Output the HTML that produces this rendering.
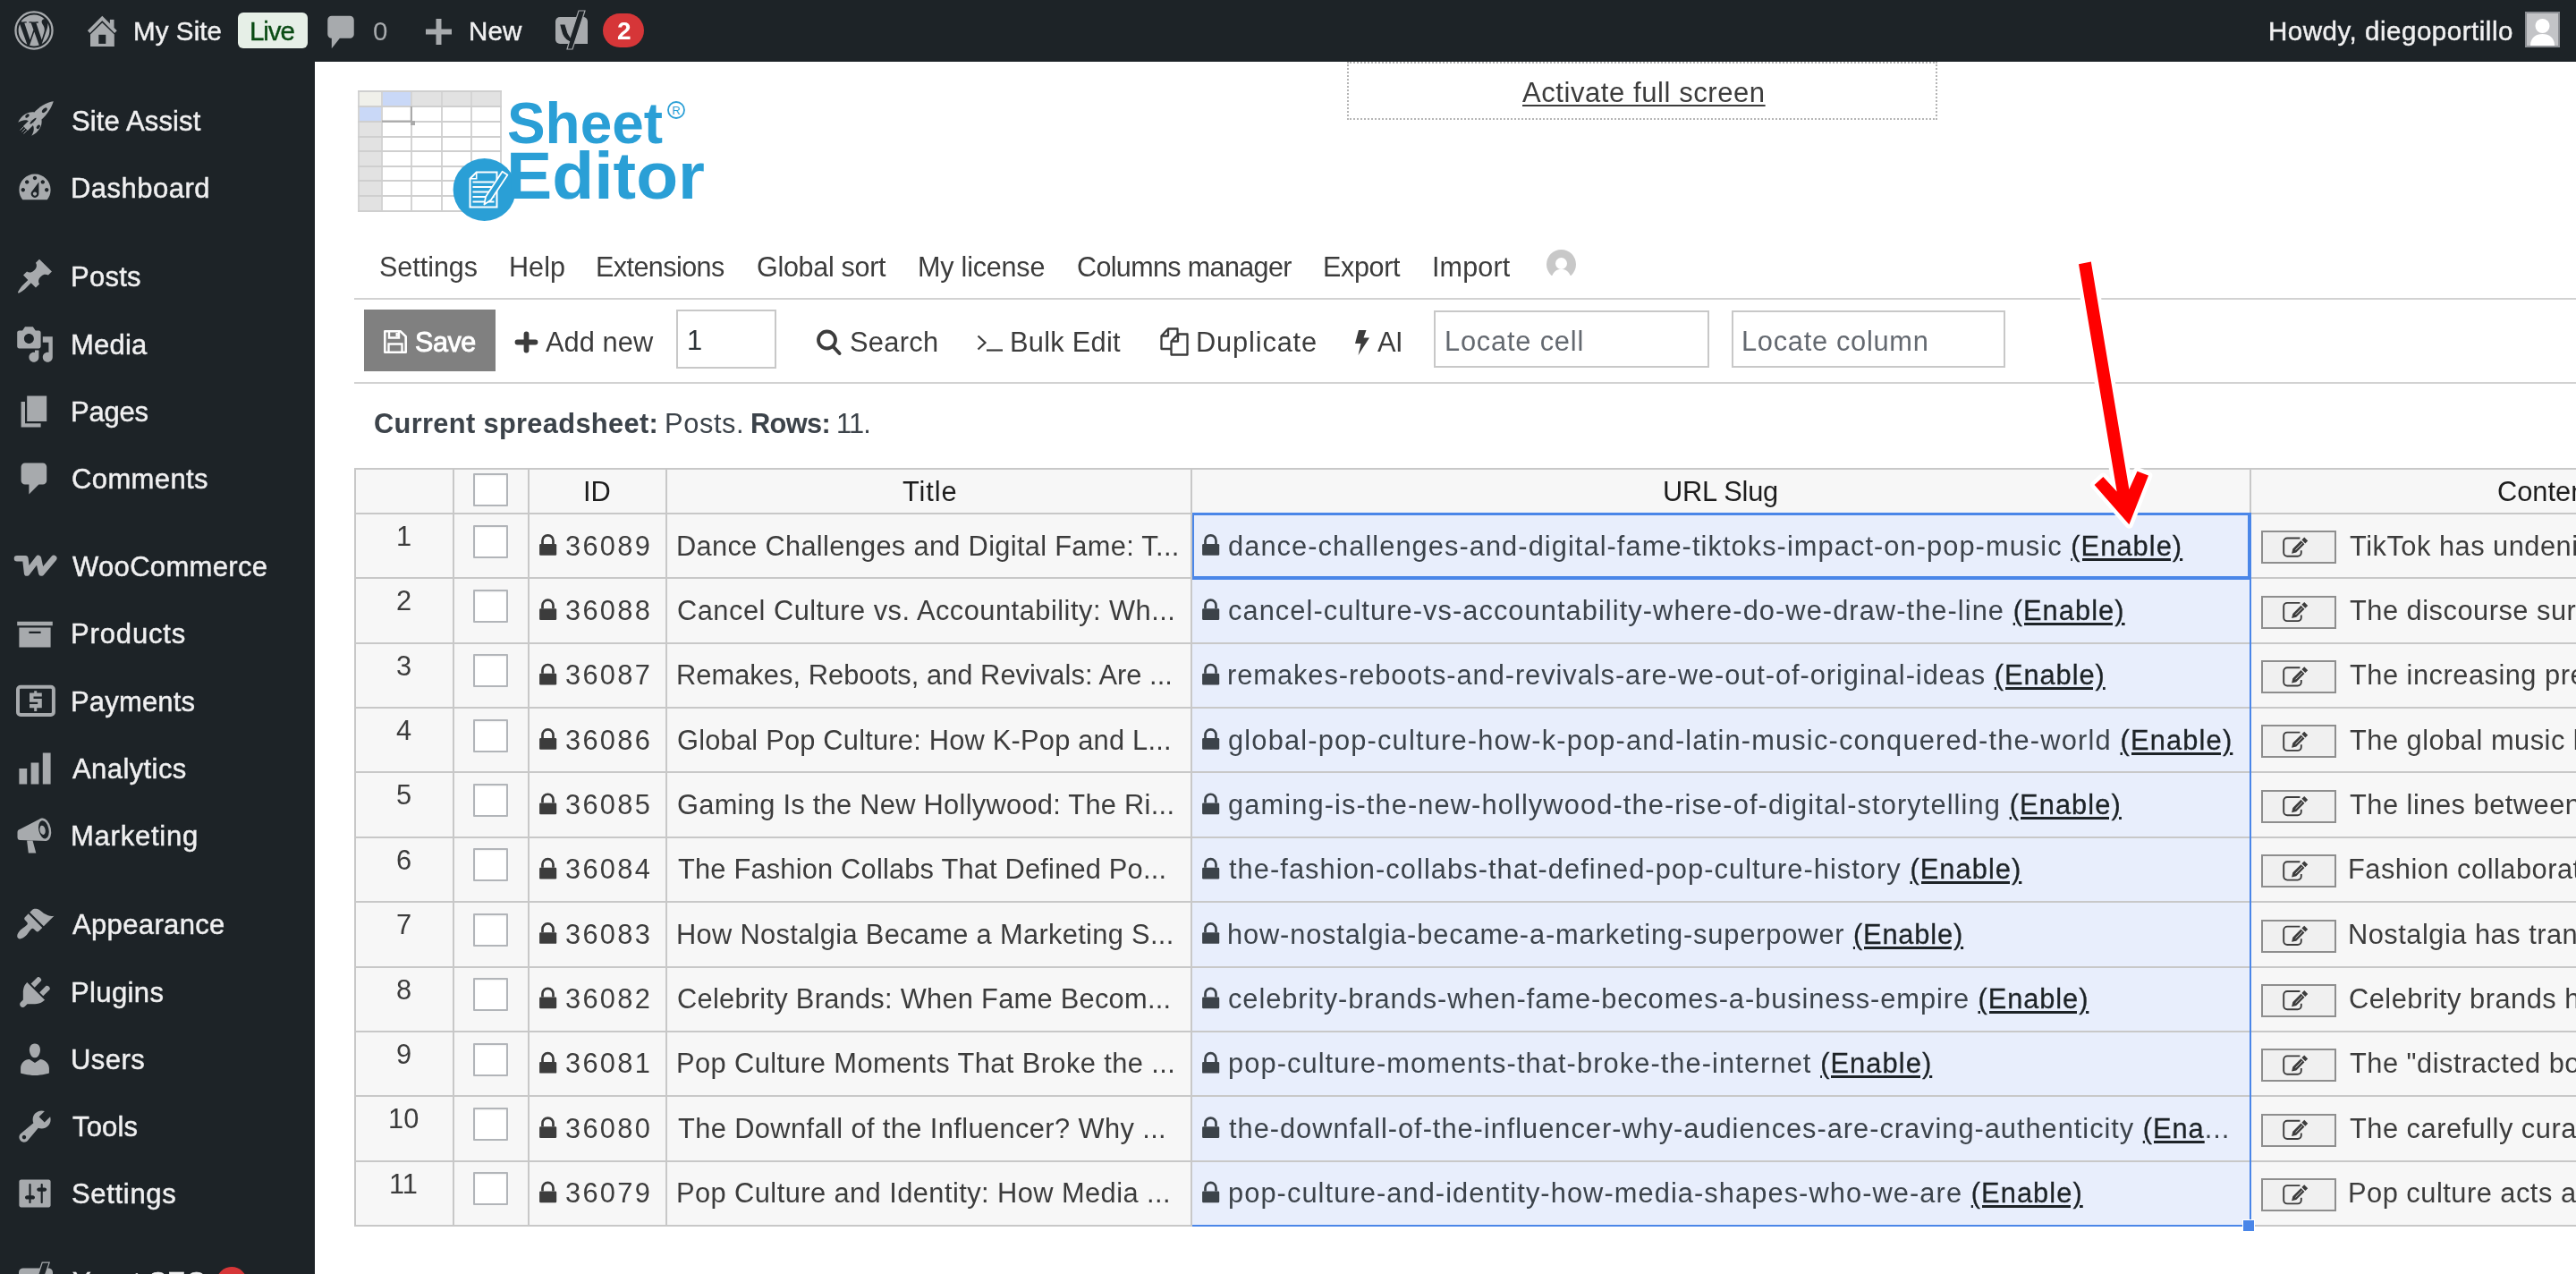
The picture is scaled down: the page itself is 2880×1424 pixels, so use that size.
<!DOCTYPE html>
<html><head><meta charset="utf-8"><title>Sheet Editor</title>
<style>
html,body{margin:0;padding:0;width:2880px;height:1424px;overflow:hidden;background:#fff;font-family:"Liberation Sans",sans-serif;}
.t{position:absolute;white-space:pre;font-family:"Liberation Sans",sans-serif;will-change:transform;}
.a{position:absolute;}
svg{position:absolute;overflow:visible;}
u{text-decoration-thickness:3px;text-underline-offset:3px;color:#1d2327;-webkit-text-stroke:0.3px #1d2327;}
b{font-weight:700;}
</style></head><body>
<div class="a" style="left:0px;top:0px;width:2880px;height:69px;background:#1d2327;"></div>
<div class="a" style="left:0px;top:69px;width:352px;height:1355px;background:#1d2327;"></div>
<svg style="left:15.5px;top:12px;" width="44" height="44" viewBox="0 0 24 24"><circle cx="12" cy="12" r="11.2" fill="none" stroke="#a7aaad" stroke-width="1.25"/><path transform="translate(12 12) scale(0.88) translate(-12 -12)" fill="#a7aaad" d="M21.469 6.825c.84 1.537 1.318 3.3 1.318 5.175 0 3.979-2.156 7.456-5.363 9.325l3.295-9.527c.615-1.54.82-2.771.82-3.864 0-.405-.026-.78-.07-1.11m-7.981.105c.647-.03 1.232-.105 1.232-.105.582-.075.514-.93-.067-.899 0 0-1.755.135-2.88.135-1.064 0-2.850-.15-2.850-.15-.585-.03-.661.855-.075.885 0 0 .54.061 1.125.09l1.68 4.605-2.37 7.08L5.354 6.9c.649-.03 1.234-.1 1.234-.1.585-.075.516-.93-.065-.896 0 0-1.746.138-2.874.138-.2 0-.438-.008-.69-.015C4.911 3.15 8.235 1.215 12 1.215c2.809 0 5.365 1.072 7.286 2.833-.046-.003-.091-.009-.141-.009-1.060 0-1.812.923-1.812 1.914 0 .89.513 1.643 1.060 2.531.411.72.89 1.643.89 2.977 0 .915-.354 1.994-.821 3.479l-1.075 3.585-3.9-11.61.001.014zM12 22.784c-1.059 0-2.081-.153-3.048-.437l3.237-9.406 3.315 9.087c.024.053.05.101.078.149-1.12.393-2.325.609-3.582.609M1.211 12c0-1.564.336-3.05.935-4.39L7.29 21.709C3.694 19.960 1.212 16.271 1.211 12"/></svg>
<svg style="left:0px;top:0px;" width="200" height="69" viewBox="0 0 200 69"><path d="M99.2 35.6L114.3 20.5L129.4 35.6" fill="none" stroke="#a7aaad" stroke-width="3.8"/><rect x="122.9" y="21.9" width="4.6" height="9" fill="#a7aaad"/><path d="M101 38.6L114.3 25.5L127.8 38.6V52H101z" fill="#a7aaad"/><rect x="110.3" y="38.8" width="8" height="10.1" fill="#1d2327"/></svg>
<svg style="left:364px;top:16px;" width="34" height="40" viewBox="2 1.5 15 17"><path fill="#a7aaad" d="M5 2h9c1.1 0 2 .9 2 2v7c0 1.1-.9 2-2 2h-5l-4 5v-5H5c-1.1 0-2-.9-2-2V4c0-1.1.9-2 2-2z"/></svg>
<svg style="left:476px;top:21px;" width="29" height="29" viewBox="0 0 29 29"><path fill="#a7aaad" d="M11.5 0h6v11.5h11.5v6H17.5v11.5h-6V17.5H0v-6h11.5z"/></svg>
<svg style="left:618px;top:11px;" width="42" height="46" viewBox="0 0 42 46"><path fill="#a7aaad" d="M8 8h26a5 5 0 0 1 5 5v25H8a5 5 0 0 1-5-5V13a5 5 0 0 1 5-5z"/><path fill="#1d2327" stroke="#a7aaad" stroke-width="1.2" d="M29 1h7l-14 43h-6l2.5-8.5C14 34 10.5 29 9 22l-1.5-6h6.5l3 10 2.5 4z"/></svg>
<div class="a" style="left:266px;top:14px;width:78px;height:40px;background:#e6efe7;border-radius:6px;"></div>
<div class="a" style="left:674px;top:15px;width:46px;height:38px;background:#d63638;border-radius:19px;"></div>
<div class="a" style="left:2823px;top:13px;width:39px;height:40px;background:#c3c4c7;box-sizing:border-box;border:2px solid #8c8f94;overflow:hidden;"></div>
<svg style="left:2825px;top:15px;" width="35" height="36" viewBox="0 0 35 36"><circle cx="17.5" cy="14" r="8" fill="#fff"/><path fill="#fff" d="M4 36c0-9 6-13 13.5-13S31 27 31 36z"/></svg>
<svg style="left:17px;top:188px;" width="44" height="44" viewBox="0 0 20 20"><g fill="#a7aaad"><path d="M3.76 16h12.48c1.1-1.37 1.76-3.11 1.76-5 0-4.42-3.58-8-8-8s-8 3.58-8 8c0 1.89.66 3.63 1.76 5zM10 4c.55 0 1 .45 1 1s-.45 1-1 1-1-.45-1-1 .45-1 1-1zM6 6c.55 0 1 .45 1 1s-.45 1-1 1-1-.45-1-1 .45-1 1-1zm8 0c.55 0 1 .45 1 1s-.45 1-1 1-1-.45-1-1 .45-1 1-1zm-5.37 5.55L12 7v6c0 1.1-.9 2-2 2s-2-.9-2-2c0-.57.24-1.08.63-1.45zM4 10c.55 0 1 .45 1 1s-.45 1-1 1-1-.45-1-1 .45-1 1-1zm12 0c.55 0 1 .45 1 1s-.45 1-1 1-1-.45-1-1 .45-1 1-1zm-5 3c0-.55-.45-1-1-1s-1 .45-1 1 .45 1 1 1 1-.45 1-1z" fill-rule="evenodd"/></g></svg>
<svg style="left:17px;top:287.4px;" width="44" height="44" viewBox="0 0 20 20"><g fill="#a7aaad"><path d="M10.44 3.02l1.82-1.82 6.36 6.35-1.83 1.82c-1.05-.68-2.48-.57-3.41.36l-.75.75c-.92.93-1.04 2.35-.35 3.41l-1.83 1.82-2.41-2.41-2.8 2.79c-.42.42-3.38 2.71-3.8 2.29s1.86-3.39 2.28-3.81l2.79-2.79L4.1 9.36l1.83-1.82c1.05.69 2.48.57 3.4-.36l.75-.75c.93-.92 1.05-2.35.36-3.41z"/></g></svg>
<svg style="left:17px;top:362.5px;" width="44" height="44" viewBox="0 0 20 20"><g fill="#a7aaad"><path fill-rule="evenodd" d="M13 11V4c0-.55-.45-1-1-1h-1.67L9 1H5L3.67 3H2c-.55 0-1 .45-1 1v7c0 .55.45 1 1 1h10c.55 0 1-.45 1-1zM7 4.5c1.38 0 2.5 1.12 2.5 2.5S8.38 9.5 7 9.5 4.5 8.38 4.5 7 5.62 4.5 7 4.5zM14 6h5v10.5c0 1.38-1.12 2.5-2.5 2.5S14 17.88 14 16.5s1.12-2.5 2.5-2.5c.17 0 .34.02.5.05V9h-3V6zm-4 8.05V13h2v3.5c0 1.38-1.12 2.5-2.5 2.5S7 17.88 7 16.5 8.12 14 9.5 14c.17 0 .34.02.5.05z"/></g></svg>
<svg style="left:17px;top:437.5px;" width="44" height="44" viewBox="0 0 20 20"><g fill="#a7aaad"><path d="M6 15V2h10v13H6zm-1 1h8v2H3V5h2v11z"/></g></svg>
<svg style="left:17px;top:512.5px;" width="44" height="44" viewBox="0 0 20 20"><g fill="#a7aaad"><path d="M5 2h9c1.1 0 2 .9 2 2v7c0 1.1-.9 2-2 2h-2l-5 5v-5H5c-1.1 0-2-.9-2-2V4c0-1.1.9-2 2-2z"/></g></svg>
<svg style="left:17px;top:686px;" width="44" height="44" viewBox="0 0 20 20"><g fill="#a7aaad"><path d="M19 4v2H1V4h18zM2 7h16v10H2V7zm11 3V9H7v1h6z"/></g></svg>
<svg style="left:17px;top:836.5px;" width="44" height="44" viewBox="0 0 20 20"><g fill="#a7aaad"><path d="M18 18V2h-4v16h4zm-6 0V7H8v11h4zm-6 0v-8H2v8h4z"/></g></svg>
<svg style="left:17px;top:1011px;" width="44" height="44" viewBox="0 0 20 20"><g fill="#a7aaad"><path d="M14.48 11.06L7.41 3.99l1.5-1.5c.5-.56 2.3-.47 3.51.32 1.21.8 1.43 1.28 2.91 2.1 1.18.64 2.45 1.26 4.45.85zm-.71.71L6.7 4.7 4.93 6.47c-.39.39-.39 1.02 0 1.41l1.06 1.06c.39.39.39 1.03 0 1.42-.6.6-1.43 1.11-2.21 1.69-.35.26-.7.53-1.01.84C1.43 14.23.4 16.08 1.4 17.07c.99 1 2.84-.03 4.18-1.36.31-.31.58-.66.85-1.02.57-.78 1.08-1.61 1.69-2.21.39-.39 1.02-.39 1.41 0l1.06 1.06c.39.39 1.02.39 1.41 0z"/></g></svg>
<svg style="left:17px;top:1086.5px;" width="44" height="44" viewBox="0 0 20 20"><g fill="#a7aaad"><path d="M13.11 4.36L9.87 7.6 8 5.73l3.24-3.24c.35-.34 1.05-.2 1.56.32.52.51.66 1.21.31 1.55zm-8 1.77l.91-1.12 9.01 9.01-1.19.84c-.71.71-2.63 1.16-3.82 1.16H6.14L4.9 17.26c-.59.59-1.54.59-2.12 0-.59-.58-.59-1.53 0-2.12l1.24-1.24v-3.88c0-1.13.4-3.19 1.09-3.89zm7.26 3.97l3.24-3.24c.34-.35 1.04-.21 1.55.31.52.51.66 1.21.31 1.55l-3.24 3.25z"/></g></svg>
<svg style="left:17px;top:1161.5px;" width="44" height="44" viewBox="0 0 20 20"><g fill="#a7aaad"><path d="M10 9.25c-2.27 0-2.73-3.44-2.73-3.44C7 4.02 7.82 2 9.97 2c2.16 0 2.98 2.02 2.71 3.81 0 0-.41 3.44-2.68 3.44zm0 2.57L12.72 10c2.39 0 4.52 2.33 4.52 4.53v2.49s-3.65 1.13-7.24 1.13c-3.65 0-7.24-1.13-7.24-1.13v-2.49c0-2.25 1.94-4.48 4.47-4.48z"/></g></svg>
<svg style="left:17px;top:1236.5px;" width="44" height="44" viewBox="0 0 20 20"><g fill="#a7aaad"><path fill-rule="evenodd" d="M16.68 9.77c-1.34 1.34-3.3 1.67-4.95.99l-5.41 6.52c-.99.99-2.59.99-3.58 0s-.99-2.59 0-3.57l6.52-5.42c-.68-1.65-.35-3.61.99-4.95 1.28-1.28 3.12-1.62 4.72-1.06l-2.89 2.89 2.82 2.82 2.86-2.87c.53 1.58.18 3.39-1.08 4.65zM3.81 16.21c.4.39 1.04.39 1.43 0 .4-.4.4-1.04 0-1.43-.39-.4-1.03-.4-1.43 0-.39.39-.39 1.03 0 1.43z"/></g></svg>
<svg style="left:17px;top:1312px;" width="44" height="44" viewBox="0 0 20 20"><g fill="#a7aaad"><path fill-rule="evenodd" d="M18 16V4c0-.55-.45-1-1-1H3c-.55 0-1 .45-1 1v12c0 .55.45 1 1 1h14c.55 0 1-.45 1-1zM8 11h1c.55 0 1 .45 1 1s-.45 1-1 1H8v1.5c0 .28-.22.5-.5.5s-.5-.22-.5-.5V13H6c-.55 0-1-.45-1-1s.45-1 1-1h1V5.5c0-.28.22-.5.5-.5s.5.22.5.5V11zm5-2h-1c-.55 0-1-.45-1-1s.45-1 1-1h1V5.5c0-.28.22-.5.5-.5s.5.22.5.5V7h1c.55 0 1 .45 1 1s-.45 1-1 1h-1v5.5c0 .28-.22.5-.5.5s-.5-.22-.5-.5V9z"/></g></svg>
<svg style="left:0;top:0" width="352" height="1424" viewBox="0 0 352 1424"><g fill="#a7aaad"><path d="M59.8 113.3C52 114.5 44 119 37.5 126.5L32.5 132.5L39.5 139.5L45.5 134.5C53 128 57.5 120.5 59.8 113.3Z"/><path d="M38.5 125.5C31 124.5 24.5 128.5 20.2 136.8C25.5 133.5 30 133.5 33.5 136Z"/><path d="M46.5 133.5C47.5 141 43.5 147.5 35.3 151.8C38.5 146.5 38.5 142 36 138.5Z"/><path d="M33.5 133.5L38.5 138.5L31 146L26 141Z"/><ellipse cx="49.8" cy="123.2" rx="3.6" ry="1.9" transform="rotate(-45 49.8 123.2)" fill="#1d2327"/><ellipse cx="37" cy="135.2" rx="4.8" ry="1.2" transform="rotate(-45 37 135.2)" fill="#1d2327"/><ellipse cx="30.5" cy="129.5" rx="2.6" ry="1.7" transform="rotate(-40 30.5 129.5)" fill="#1d2327"/><ellipse cx="42.8" cy="141.8" rx="2.6" ry="1.7" transform="rotate(-50 42.8 141.8)" fill="#1d2327"/><path d="M24.5 147.5l4-4M26.5 149.5l4-4M22.5 145.5l4-4" stroke="#a7aaad" stroke-width="0.9" fill="none"/><path d="M19 624.2H28.3L30.2 640.5L42.8 624L46.3 640.5L60.2 624" fill="none" stroke="#a7aaad" stroke-width="6.6" stroke-linejoin="round" stroke-linecap="round"/><rect x="20" y="767.8" width="39.9" height="31.2" rx="3" fill="none" stroke="#a7aaad" stroke-width="4"/><path d="M38.2 772.2h3v2.2h5.6v4.2h-9.3v2.4h9.3v10.3h-5.6v3.6h-3v-3.6h-5.2v-4.2h9.2v-2.4h-9.2v-10.3h5.2z"/><path d="M22.5 926.8L46.2 914.5L52.1 939.9L22.5 939Q19.5 939 19.5 935.5V930.5Q19.5 927.5 22.5 926.8Z"/><ellipse cx="49.5" cy="927.2" rx="7.4" ry="12.9" transform="rotate(-12 49.5 927.2)"/><ellipse cx="48.9" cy="927.3" rx="5.6" ry="10.3" transform="rotate(-12 48.9 927.3)" fill="#1d2327"/><ellipse cx="47.6" cy="927.8" rx="3.1" ry="5.2" transform="rotate(-12 47.6 927.8)"/><path d="M30.1 939.5H36.5L40.3 953.5H31.8Z"/><path d="M26 1417.4H54a5 5 0 0 1 5 5V1460H26a5 5 0 0 1-5-5V1422.4a5 5 0 0 1 5-5z"/><path d="M47.2 1411.2H55.2L42 1450H34z" fill="#1d2327" stroke="#a7aaad" stroke-width="1.2"/></g></svg>
<div class="a" style="left:242px;top:1416px;width:34px;height:34px;background:#d63638;border-radius:17px;"></div>
<svg style="left:0;top:0" width="2880" height="300" viewBox="0 0 2880 300"><rect x="401" y="102" width="159" height="17" fill="#e2e2e2"/><rect x="401" y="102" width="26" height="134" fill="#e2e2e2"/><rect x="402" y="103" width="25" height="16" fill="#f0f0ea"/><rect x="427" y="103" width="33" height="16" fill="#c9d8f7"/><rect x="402" y="119" width="25" height="17" fill="#c9d8f7"/><rect x="400" y="101" width="2" height="136" fill="#d4d4d4"/><rect x="426" y="101" width="2" height="136" fill="#d4d4d4"/><rect x="459" y="101" width="2" height="136" fill="#d4d4d4"/><rect x="493" y="101" width="2" height="136" fill="#d4d4d4"/><rect x="526" y="101" width="2" height="136" fill="#d4d4d4"/><rect x="559" y="101" width="2" height="136" fill="#d4d4d4"/><rect x="400" y="101" width="161" height="2" fill="#cfcfcf"/><rect x="400" y="118" width="161" height="2" fill="#cfcfcf"/><rect x="400" y="135" width="161" height="2" fill="#cfcfcf"/><rect x="400" y="152" width="161" height="2" fill="#cfcfcf"/><rect x="400" y="168" width="161" height="2" fill="#cfcfcf"/><rect x="400" y="185" width="161" height="2" fill="#cfcfcf"/><rect x="400" y="201" width="161" height="2" fill="#cfcfcf"/><rect x="400" y="218" width="161" height="2" fill="#cfcfcf"/><rect x="400" y="235" width="161" height="2" fill="#cfcfcf"/><circle cx="541.6" cy="212" r="35" fill="#2a9fd6"/><path d="M532.7 192.5H555.5V231.5H525.5V199.7z" fill="none" stroke="#fff" stroke-width="2"/><path d="M532.7 192.5V199.7H525.5" fill="none" stroke="#fff" stroke-width="1.6"/><rect x="528.5" y="202.5" width="24" height="2" fill="#fff"/><rect x="528.5" y="208" width="24" height="2" fill="#fff"/><rect x="528.5" y="213.5" width="24" height="2" fill="#fff"/><rect x="528.5" y="219" width="24" height="2" fill="#fff"/><rect x="528.5" y="224.5" width="24" height="2" fill="#fff"/><path d="M567.4 195.5L548.9 223.5L541.4 228.6L543.1 219.7L561.6 191.7z" fill="#2a9fd6" stroke="#fff" stroke-width="1.8" stroke-linejoin="round"/><rect x="427" y="134.5" width="33" height="2.2" fill="#aaa"/><rect x="458.8" y="119" width="2.2" height="17" fill="#aaa"/><rect x="459" y="135" width="5" height="5" fill="#aaa"/><text x="567" y="160.3" font-family="Liberation Sans" font-weight="700" font-size="64" fill="#2a9fd6" textLength="174" lengthAdjust="spacingAndGlyphs">Sheet</text><text x="566" y="221.8" font-family="Liberation Sans" font-weight="700" font-size="74" fill="#2a9fd6" textLength="222" lengthAdjust="spacingAndGlyphs">Editor</text><circle cx="756" cy="123" r="9" fill="none" stroke="#2a9fd6" stroke-width="1.8"/><text x="756" y="128" text-anchor="middle" font-family="Liberation Sans" font-size="13" fill="#2a9fd6">R</text></svg>
<div class="a" style="left:1506px;top:69px;width:660px;height:65px;background:transparent;box-sizing:border-box;border:2px dotted #b5b5b5;"></div>
<svg style="left:1729px;top:279px;overflow:hidden;" width="33" height="29" viewBox="0 0 33 29"><circle cx="16.5" cy="16.5" r="16.5" fill="#c8c8c8"/><circle cx="16.5" cy="15.5" r="6.5" fill="#fff"/><path d="M6 30c2-6 6-8 10.5-8S25 24 27 30z" fill="#fff"/></svg>
<div class="a" style="left:396px;top:333px;width:2484px;height:2px;background:#d2d2d2;"></div>
<div class="a" style="left:396px;top:427px;width:2484px;height:2px;background:#d2d2d2;"></div>
<div class="a" style="left:407px;top:346px;width:147px;height:69px;background:#808080;"></div>
<svg style="left:429px;top:369px;" width="26" height="26" viewBox="0 0 26 26"><path d="M1.3 1.3h17.5l5.9 5.9v17.5H1.3z" fill="none" stroke="#fff" stroke-width="2.6" stroke-linejoin="round"/><path d="M6 1.5v7h11v-7" fill="none" stroke="#fff" stroke-width="2.4"/><rect x="13.5" y="3" width="2.4" height="4" fill="#fff"/><path d="M5.5 24.5v-9h15v9" fill="none" stroke="#fff" stroke-width="2.4"/></svg>
<svg style="left:576px;top:371px;" width="25" height="23" viewBox="0 0 25 23"><path d="M12.5 2.5v18M2.5 11.5h20" stroke="#3c3c3c" stroke-width="5.8" stroke-linecap="round"/></svg>
<div class="a" style="left:756px;top:346px;width:112px;height:66px;background:#fff;box-sizing:border-box;border:2px solid #c8c8c8;"></div>
<svg style="left:912px;top:368px;" width="30" height="30" viewBox="0 0 30 30"><circle cx="12.5" cy="12" r="9.5" fill="none" stroke="#3c3c3c" stroke-width="3.8"/><path d="M19.5 19.5l7 7.5" stroke="#3c3c3c" stroke-width="4" stroke-linecap="round"/></svg>
<svg style="left:1092px;top:374px;" width="30" height="20" viewBox="0 0 30 20"><path d="M1.5 1.5l8 7.5-8 7.5" fill="none" stroke="#3c3c3c" stroke-width="2.2"/><path d="M11 17.5h18" stroke="#3c3c3c" stroke-width="2.2"/></svg>
<svg style="left:1297px;top:366px;" width="33" height="33" viewBox="1297 366 33 33"><g fill="none" stroke="#3c3c3c" stroke-width="2.3" stroke-linejoin="round"><path d="M1306 367.5H1316.5V374M1309.5 390H1298.5V375.5L1306 367.5V375.5H1298.5"/><path d="M1317 373.5H1327.5V396.5H1309.5V381.5L1317 373.5V381.5H1309.5"/></g></svg>
<svg style="left:1514px;top:368px;" width="18" height="30" viewBox="0 0 18 30"><path d="M5 1h8.5l-3 8.5H17L4.5 29l3-13H1z" fill="#3c3c3c"/></svg>
<div class="a" style="left:1603px;top:347px;width:308px;height:64px;background:#fff;box-sizing:border-box;border:2px solid #c8c8c8;"></div>
<div class="a" style="left:1936px;top:347px;width:306px;height:64px;background:#fff;box-sizing:border-box;border:2px solid #c8c8c8;"></div>
<div class="a" style="left:397px;top:523px;width:2483px;height:848px;background:#f7f7f7;"></div>
<div class="a" style="left:1333px;top:575px;width:1183px;height:796px;background:#e8eefc;"></div>
<div class="a" style="left:396px;top:523px;width:2484px;height:2px;background:#c8c8c8;"></div>
<div class="a" style="left:396px;top:573px;width:2484px;height:2px;background:#c8c8c8;"></div>
<div class="a" style="left:396px;top:645px;width:2484px;height:2px;background:#c8c8c8;"></div>
<div class="a" style="left:396px;top:718px;width:2484px;height:2px;background:#c8c8c8;"></div>
<div class="a" style="left:396px;top:790px;width:2484px;height:2px;background:#c8c8c8;"></div>
<div class="a" style="left:396px;top:862px;width:2484px;height:2px;background:#c8c8c8;"></div>
<div class="a" style="left:396px;top:935px;width:2484px;height:2px;background:#c8c8c8;"></div>
<div class="a" style="left:396px;top:1007px;width:2484px;height:2px;background:#c8c8c8;"></div>
<div class="a" style="left:396px;top:1080px;width:2484px;height:2px;background:#c8c8c8;"></div>
<div class="a" style="left:396px;top:1152px;width:2484px;height:2px;background:#c8c8c8;"></div>
<div class="a" style="left:396px;top:1224px;width:2484px;height:2px;background:#c8c8c8;"></div>
<div class="a" style="left:396px;top:1297px;width:2484px;height:2px;background:#c8c8c8;"></div>
<div class="a" style="left:396px;top:1369px;width:2484px;height:2px;background:#c8c8c8;"></div>
<div class="a" style="left:396px;top:523px;width:2px;height:848px;background:#c8c8c8;"></div>
<div class="a" style="left:506px;top:523px;width:2px;height:848px;background:#c8c8c8;"></div>
<div class="a" style="left:590px;top:523px;width:2px;height:848px;background:#c8c8c8;"></div>
<div class="a" style="left:744px;top:523px;width:2px;height:848px;background:#c8c8c8;"></div>
<div class="a" style="left:1331px;top:523px;width:2px;height:848px;background:#c8c8c8;"></div>
<div class="a" style="left:2515px;top:523px;width:2px;height:848px;background:#c8c8c8;"></div>
<div class="a" style="left:529px;top:529px;width:39px;height:37px;background:#fff;box-sizing:border-box;border:2px solid #b2b5b9;border-radius:1px;box-shadow:inset 0 1px 2px rgba(0,0,0,.06);"></div>
<div class="a" style="left:529px;top:587px;width:39px;height:37px;background:#fff;box-sizing:border-box;border:2px solid #b2b5b9;border-radius:1px;box-shadow:inset 0 1px 2px rgba(0,0,0,.06);"></div>
<div class="a" style="left:2528px;top:593px;width:84px;height:37px;background:#f0f0f0;box-sizing:border-box;border:2px solid #8e8e8e;"></div>
<div class="a" style="left:529px;top:659px;width:39px;height:37px;background:#fff;box-sizing:border-box;border:2px solid #b2b5b9;border-radius:1px;box-shadow:inset 0 1px 2px rgba(0,0,0,.06);"></div>
<div class="a" style="left:2528px;top:666px;width:84px;height:37px;background:#f0f0f0;box-sizing:border-box;border:2px solid #8e8e8e;"></div>
<div class="a" style="left:529px;top:731px;width:39px;height:37px;background:#fff;box-sizing:border-box;border:2px solid #b2b5b9;border-radius:1px;box-shadow:inset 0 1px 2px rgba(0,0,0,.06);"></div>
<div class="a" style="left:2528px;top:738px;width:84px;height:37px;background:#f0f0f0;box-sizing:border-box;border:2px solid #8e8e8e;"></div>
<div class="a" style="left:529px;top:804px;width:39px;height:37px;background:#fff;box-sizing:border-box;border:2px solid #b2b5b9;border-radius:1px;box-shadow:inset 0 1px 2px rgba(0,0,0,.06);"></div>
<div class="a" style="left:2528px;top:810px;width:84px;height:37px;background:#f0f0f0;box-sizing:border-box;border:2px solid #8e8e8e;"></div>
<div class="a" style="left:529px;top:876px;width:39px;height:37px;background:#fff;box-sizing:border-box;border:2px solid #b2b5b9;border-radius:1px;box-shadow:inset 0 1px 2px rgba(0,0,0,.06);"></div>
<div class="a" style="left:2528px;top:883px;width:84px;height:37px;background:#f0f0f0;box-sizing:border-box;border:2px solid #8e8e8e;"></div>
<div class="a" style="left:529px;top:948px;width:39px;height:37px;background:#fff;box-sizing:border-box;border:2px solid #b2b5b9;border-radius:1px;box-shadow:inset 0 1px 2px rgba(0,0,0,.06);"></div>
<div class="a" style="left:2528px;top:955px;width:84px;height:37px;background:#f0f0f0;box-sizing:border-box;border:2px solid #8e8e8e;"></div>
<div class="a" style="left:529px;top:1021px;width:39px;height:37px;background:#fff;box-sizing:border-box;border:2px solid #b2b5b9;border-radius:1px;box-shadow:inset 0 1px 2px rgba(0,0,0,.06);"></div>
<div class="a" style="left:2528px;top:1028px;width:84px;height:37px;background:#f0f0f0;box-sizing:border-box;border:2px solid #8e8e8e;"></div>
<div class="a" style="left:529px;top:1093px;width:39px;height:37px;background:#fff;box-sizing:border-box;border:2px solid #b2b5b9;border-radius:1px;box-shadow:inset 0 1px 2px rgba(0,0,0,.06);"></div>
<div class="a" style="left:2528px;top:1100px;width:84px;height:37px;background:#f0f0f0;box-sizing:border-box;border:2px solid #8e8e8e;"></div>
<div class="a" style="left:529px;top:1166px;width:39px;height:37px;background:#fff;box-sizing:border-box;border:2px solid #b2b5b9;border-radius:1px;box-shadow:inset 0 1px 2px rgba(0,0,0,.06);"></div>
<div class="a" style="left:2528px;top:1172px;width:84px;height:37px;background:#f0f0f0;box-sizing:border-box;border:2px solid #8e8e8e;"></div>
<div class="a" style="left:529px;top:1238px;width:39px;height:37px;background:#fff;box-sizing:border-box;border:2px solid #b2b5b9;border-radius:1px;box-shadow:inset 0 1px 2px rgba(0,0,0,.06);"></div>
<div class="a" style="left:2528px;top:1245px;width:84px;height:37px;background:#f0f0f0;box-sizing:border-box;border:2px solid #8e8e8e;"></div>
<div class="a" style="left:529px;top:1310px;width:39px;height:37px;background:#fff;box-sizing:border-box;border:2px solid #b2b5b9;border-radius:1px;box-shadow:inset 0 1px 2px rgba(0,0,0,.06);"></div>
<div class="a" style="left:2528px;top:1317px;width:84px;height:37px;background:#f0f0f0;box-sizing:border-box;border:2px solid #8e8e8e;"></div>
<div class="a" style="left:2515px;top:573px;width:2px;height:798px;background:#4a86e8;"></div>
<div class="a" style="left:1333px;top:1369px;width:1184px;height:2px;background:#4a86e8;"></div>
<div class="a" style="left:1333px;top:573px;width:1184px;height:75px;background:transparent;box-sizing:border-box;border-style:solid;border-color:#4a86e8;border-width:3px 4px 4px 2px;"></div>
<div class="a" style="left:2507px;top:1363px;width:14px;height:14px;background:#4a86e8;box-sizing:border-box;border:1px solid #fff;"></div>
<svg style="left:0;top:0" width="2880" height="1424" viewBox="0 0 2880 1424"><path d="M606.5 608.0V604.3A6 6 0 0 1 618.5 604.3V608.0" fill="none" stroke="#3c3c3c" stroke-width="2.7"/><rect x="603.1" y="608.0" width="19.1" height="12.7" rx="1.2" fill="#3c3c3c"/><path d="M1347.5 608.0V604.3A6 6 0 0 1 1359.5 604.3V608.0" fill="none" stroke="#3c434a" stroke-width="2.7"/><rect x="1344.1" y="608.0" width="19.1" height="12.7" rx="1.2" fill="#3c434a"/><path d="M2571.4 601.50H2557.2a4 4 0 0 0-4 4V617.80a4 4 0 0 0 4 4H2568.8a4 4 0 0 0 4-4V615.20" fill="none" stroke="#3c3c3c" stroke-width="1.9"/><path d="M2562.10 618.70L2563.30 613.54L2572.49 604.35L2576.45 608.31L2567.26 617.50Z M2573.41 603.43L2576.24 600.60L2580.20 604.56L2577.37 607.39Z" fill="#f0f0f0" stroke="#f0f0f0" stroke-width="2.6" stroke-linejoin="round"/><path d="M2562.10 618.70L2563.30 613.54L2572.49 604.35L2576.45 608.31L2567.26 617.50Z M2573.41 603.43L2576.24 600.60L2580.20 604.56L2577.37 607.39Z" fill="#3c3c3c"/><path d="M2566.48 614.60L2573.91 607.17" stroke="#f0f0f0" stroke-width="0.9"/><path d="M606.5 680.36V676.66A6 6 0 0 1 618.5 676.66V680.36" fill="none" stroke="#3c3c3c" stroke-width="2.7"/><rect x="603.1" y="680.36" width="19.1" height="12.7" rx="1.2" fill="#3c3c3c"/><path d="M1347.5 680.36V676.66A6 6 0 0 1 1359.5 676.66V680.36" fill="none" stroke="#3c434a" stroke-width="2.7"/><rect x="1344.1" y="680.36" width="19.1" height="12.7" rx="1.2" fill="#3c434a"/><path d="M2571.4 673.86H2557.2a4 4 0 0 0-4 4V690.16a4 4 0 0 0 4 4H2568.8a4 4 0 0 0 4-4V687.56" fill="none" stroke="#3c3c3c" stroke-width="1.9"/><path d="M2562.10 691.06L2563.30 685.90L2572.49 676.71L2576.45 680.67L2567.26 689.86Z M2573.41 675.79L2576.24 672.96L2580.20 676.92L2577.37 679.75Z" fill="#f0f0f0" stroke="#f0f0f0" stroke-width="2.6" stroke-linejoin="round"/><path d="M2562.10 691.06L2563.30 685.90L2572.49 676.71L2576.45 680.67L2567.26 689.86Z M2573.41 675.79L2576.24 672.96L2580.20 676.92L2577.37 679.75Z" fill="#3c3c3c"/><path d="M2566.48 686.96L2573.91 679.53" stroke="#f0f0f0" stroke-width="0.9"/><path d="M606.5 752.72V749.02A6 6 0 0 1 618.5 749.02V752.72" fill="none" stroke="#3c3c3c" stroke-width="2.7"/><rect x="603.1" y="752.72" width="19.1" height="12.7" rx="1.2" fill="#3c3c3c"/><path d="M1347.5 752.72V749.02A6 6 0 0 1 1359.5 749.02V752.72" fill="none" stroke="#3c434a" stroke-width="2.7"/><rect x="1344.1" y="752.72" width="19.1" height="12.7" rx="1.2" fill="#3c434a"/><path d="M2571.4 746.22H2557.2a4 4 0 0 0-4 4V762.52a4 4 0 0 0 4 4H2568.8a4 4 0 0 0 4-4V759.92" fill="none" stroke="#3c3c3c" stroke-width="1.9"/><path d="M2562.10 763.42L2563.30 758.26L2572.49 749.07L2576.45 753.03L2567.26 762.22Z M2573.41 748.15L2576.24 745.32L2580.20 749.28L2577.37 752.11Z" fill="#f0f0f0" stroke="#f0f0f0" stroke-width="2.6" stroke-linejoin="round"/><path d="M2562.10 763.42L2563.30 758.26L2572.49 749.07L2576.45 753.03L2567.26 762.22Z M2573.41 748.15L2576.24 745.32L2580.20 749.28L2577.37 752.11Z" fill="#3c3c3c"/><path d="M2566.48 759.32L2573.91 751.89" stroke="#f0f0f0" stroke-width="0.9"/><path d="M606.5 825.0799999999999V821.3799999999999A6 6 0 0 1 618.5 821.3799999999999V825.0799999999999" fill="none" stroke="#3c3c3c" stroke-width="2.7"/><rect x="603.1" y="825.0799999999999" width="19.1" height="12.7" rx="1.2" fill="#3c3c3c"/><path d="M1347.5 825.0799999999999V821.3799999999999A6 6 0 0 1 1359.5 821.3799999999999V825.0799999999999" fill="none" stroke="#3c434a" stroke-width="2.7"/><rect x="1344.1" y="825.0799999999999" width="19.1" height="12.7" rx="1.2" fill="#3c434a"/><path d="M2571.4 818.58H2557.2a4 4 0 0 0-4 4V834.88a4 4 0 0 0 4 4H2568.8a4 4 0 0 0 4-4V832.28" fill="none" stroke="#3c3c3c" stroke-width="1.9"/><path d="M2562.10 835.78L2563.30 830.62L2572.49 821.43L2576.45 825.39L2567.26 834.58Z M2573.41 820.51L2576.24 817.68L2580.20 821.64L2577.37 824.47Z" fill="#f0f0f0" stroke="#f0f0f0" stroke-width="2.6" stroke-linejoin="round"/><path d="M2562.10 835.78L2563.30 830.62L2572.49 821.43L2576.45 825.39L2567.26 834.58Z M2573.41 820.51L2576.24 817.68L2580.20 821.64L2577.37 824.47Z" fill="#3c3c3c"/><path d="M2566.48 831.68L2573.91 824.25" stroke="#f0f0f0" stroke-width="0.9"/><path d="M606.5 897.44V893.74A6 6 0 0 1 618.5 893.74V897.44" fill="none" stroke="#3c3c3c" stroke-width="2.7"/><rect x="603.1" y="897.44" width="19.1" height="12.7" rx="1.2" fill="#3c3c3c"/><path d="M1347.5 897.44V893.74A6 6 0 0 1 1359.5 893.74V897.44" fill="none" stroke="#3c434a" stroke-width="2.7"/><rect x="1344.1" y="897.44" width="19.1" height="12.7" rx="1.2" fill="#3c434a"/><path d="M2571.4 890.94H2557.2a4 4 0 0 0-4 4V907.24a4 4 0 0 0 4 4H2568.8a4 4 0 0 0 4-4V904.64" fill="none" stroke="#3c3c3c" stroke-width="1.9"/><path d="M2562.10 908.14L2563.30 902.98L2572.49 893.79L2576.45 897.75L2567.26 906.94Z M2573.41 892.87L2576.24 890.04L2580.20 894.00L2577.37 896.83Z" fill="#f0f0f0" stroke="#f0f0f0" stroke-width="2.6" stroke-linejoin="round"/><path d="M2562.10 908.14L2563.30 902.98L2572.49 893.79L2576.45 897.75L2567.26 906.94Z M2573.41 892.87L2576.24 890.04L2580.20 894.00L2577.37 896.83Z" fill="#3c3c3c"/><path d="M2566.48 904.04L2573.91 896.61" stroke="#f0f0f0" stroke-width="0.9"/><path d="M606.5 969.8V966.0999999999999A6 6 0 0 1 618.5 966.0999999999999V969.8" fill="none" stroke="#3c3c3c" stroke-width="2.7"/><rect x="603.1" y="969.8" width="19.1" height="12.7" rx="1.2" fill="#3c3c3c"/><path d="M1347.5 969.8V966.0999999999999A6 6 0 0 1 1359.5 966.0999999999999V969.8" fill="none" stroke="#3c434a" stroke-width="2.7"/><rect x="1344.1" y="969.8" width="19.1" height="12.7" rx="1.2" fill="#3c434a"/><path d="M2571.4 963.30H2557.2a4 4 0 0 0-4 4V979.60a4 4 0 0 0 4 4H2568.8a4 4 0 0 0 4-4V977.00" fill="none" stroke="#3c3c3c" stroke-width="1.9"/><path d="M2562.10 980.50L2563.30 975.34L2572.49 966.15L2576.45 970.11L2567.26 979.30Z M2573.41 965.23L2576.24 962.40L2580.20 966.36L2577.37 969.19Z" fill="#f0f0f0" stroke="#f0f0f0" stroke-width="2.6" stroke-linejoin="round"/><path d="M2562.10 980.50L2563.30 975.34L2572.49 966.15L2576.45 970.11L2567.26 979.30Z M2573.41 965.23L2576.24 962.40L2580.20 966.36L2577.37 969.19Z" fill="#3c3c3c"/><path d="M2566.48 976.40L2573.91 968.97" stroke="#f0f0f0" stroke-width="0.9"/><path d="M606.5 1042.1599999999999V1038.4599999999998A6 6 0 0 1 618.5 1038.4599999999998V1042.1599999999999" fill="none" stroke="#3c3c3c" stroke-width="2.7"/><rect x="603.1" y="1042.1599999999999" width="19.1" height="12.7" rx="1.2" fill="#3c3c3c"/><path d="M1347.5 1042.1599999999999V1038.4599999999998A6 6 0 0 1 1359.5 1038.4599999999998V1042.1599999999999" fill="none" stroke="#3c434a" stroke-width="2.7"/><rect x="1344.1" y="1042.1599999999999" width="19.1" height="12.7" rx="1.2" fill="#3c434a"/><path d="M2571.4 1035.66H2557.2a4 4 0 0 0-4 4V1051.96a4 4 0 0 0 4 4H2568.8a4 4 0 0 0 4-4V1049.36" fill="none" stroke="#3c3c3c" stroke-width="1.9"/><path d="M2562.10 1052.86L2563.30 1047.70L2572.49 1038.51L2576.45 1042.47L2567.26 1051.66Z M2573.41 1037.59L2576.24 1034.76L2580.20 1038.72L2577.37 1041.55Z" fill="#f0f0f0" stroke="#f0f0f0" stroke-width="2.6" stroke-linejoin="round"/><path d="M2562.10 1052.86L2563.30 1047.70L2572.49 1038.51L2576.45 1042.47L2567.26 1051.66Z M2573.41 1037.59L2576.24 1034.76L2580.20 1038.72L2577.37 1041.55Z" fill="#3c3c3c"/><path d="M2566.48 1048.76L2573.91 1041.33" stroke="#f0f0f0" stroke-width="0.9"/><path d="M606.5 1114.52V1110.82A6 6 0 0 1 618.5 1110.82V1114.52" fill="none" stroke="#3c3c3c" stroke-width="2.7"/><rect x="603.1" y="1114.52" width="19.1" height="12.7" rx="1.2" fill="#3c3c3c"/><path d="M1347.5 1114.52V1110.82A6 6 0 0 1 1359.5 1110.82V1114.52" fill="none" stroke="#3c434a" stroke-width="2.7"/><rect x="1344.1" y="1114.52" width="19.1" height="12.7" rx="1.2" fill="#3c434a"/><path d="M2571.4 1108.02H2557.2a4 4 0 0 0-4 4V1124.32a4 4 0 0 0 4 4H2568.8a4 4 0 0 0 4-4V1121.72" fill="none" stroke="#3c3c3c" stroke-width="1.9"/><path d="M2562.10 1125.22L2563.30 1120.06L2572.49 1110.87L2576.45 1114.83L2567.26 1124.02Z M2573.41 1109.95L2576.24 1107.12L2580.20 1111.08L2577.37 1113.91Z" fill="#f0f0f0" stroke="#f0f0f0" stroke-width="2.6" stroke-linejoin="round"/><path d="M2562.10 1125.22L2563.30 1120.06L2572.49 1110.87L2576.45 1114.83L2567.26 1124.02Z M2573.41 1109.95L2576.24 1107.12L2580.20 1111.08L2577.37 1113.91Z" fill="#3c3c3c"/><path d="M2566.48 1121.12L2573.91 1113.69" stroke="#f0f0f0" stroke-width="0.9"/><path d="M606.5 1186.88V1183.18A6 6 0 0 1 618.5 1183.18V1186.88" fill="none" stroke="#3c3c3c" stroke-width="2.7"/><rect x="603.1" y="1186.88" width="19.1" height="12.7" rx="1.2" fill="#3c3c3c"/><path d="M1347.5 1186.88V1183.18A6 6 0 0 1 1359.5 1183.18V1186.88" fill="none" stroke="#3c434a" stroke-width="2.7"/><rect x="1344.1" y="1186.88" width="19.1" height="12.7" rx="1.2" fill="#3c434a"/><path d="M2571.4 1180.38H2557.2a4 4 0 0 0-4 4V1196.68a4 4 0 0 0 4 4H2568.8a4 4 0 0 0 4-4V1194.08" fill="none" stroke="#3c3c3c" stroke-width="1.9"/><path d="M2562.10 1197.58L2563.30 1192.42L2572.49 1183.23L2576.45 1187.19L2567.26 1196.38Z M2573.41 1182.31L2576.24 1179.48L2580.20 1183.44L2577.37 1186.27Z" fill="#f0f0f0" stroke="#f0f0f0" stroke-width="2.6" stroke-linejoin="round"/><path d="M2562.10 1197.58L2563.30 1192.42L2572.49 1183.23L2576.45 1187.19L2567.26 1196.38Z M2573.41 1182.31L2576.24 1179.48L2580.20 1183.44L2577.37 1186.27Z" fill="#3c3c3c"/><path d="M2566.48 1193.48L2573.91 1186.05" stroke="#f0f0f0" stroke-width="0.9"/><path d="M606.5 1259.24V1255.54A6 6 0 0 1 618.5 1255.54V1259.24" fill="none" stroke="#3c3c3c" stroke-width="2.7"/><rect x="603.1" y="1259.24" width="19.1" height="12.7" rx="1.2" fill="#3c3c3c"/><path d="M1347.5 1259.24V1255.54A6 6 0 0 1 1359.5 1255.54V1259.24" fill="none" stroke="#3c434a" stroke-width="2.7"/><rect x="1344.1" y="1259.24" width="19.1" height="12.7" rx="1.2" fill="#3c434a"/><path d="M2571.4 1252.74H2557.2a4 4 0 0 0-4 4V1269.04a4 4 0 0 0 4 4H2568.8a4 4 0 0 0 4-4V1266.44" fill="none" stroke="#3c3c3c" stroke-width="1.9"/><path d="M2562.10 1269.94L2563.30 1264.78L2572.49 1255.59L2576.45 1259.55L2567.26 1268.74Z M2573.41 1254.67L2576.24 1251.84L2580.20 1255.80L2577.37 1258.63Z" fill="#f0f0f0" stroke="#f0f0f0" stroke-width="2.6" stroke-linejoin="round"/><path d="M2562.10 1269.94L2563.30 1264.78L2572.49 1255.59L2576.45 1259.55L2567.26 1268.74Z M2573.41 1254.67L2576.24 1251.84L2580.20 1255.80L2577.37 1258.63Z" fill="#3c3c3c"/><path d="M2566.48 1265.84L2573.91 1258.41" stroke="#f0f0f0" stroke-width="0.9"/><path d="M606.5 1331.6V1327.8999999999999A6 6 0 0 1 618.5 1327.8999999999999V1331.6" fill="none" stroke="#3c3c3c" stroke-width="2.7"/><rect x="603.1" y="1331.6" width="19.1" height="12.7" rx="1.2" fill="#3c3c3c"/><path d="M1347.5 1331.6V1327.8999999999999A6 6 0 0 1 1359.5 1327.8999999999999V1331.6" fill="none" stroke="#3c434a" stroke-width="2.7"/><rect x="1344.1" y="1331.6" width="19.1" height="12.7" rx="1.2" fill="#3c434a"/><path d="M2571.4 1325.10H2557.2a4 4 0 0 0-4 4V1341.40a4 4 0 0 0 4 4H2568.8a4 4 0 0 0 4-4V1338.80" fill="none" stroke="#3c3c3c" stroke-width="1.9"/><path d="M2562.10 1342.30L2563.30 1337.14L2572.49 1327.95L2576.45 1331.91L2567.26 1341.10Z M2573.41 1327.03L2576.24 1324.20L2580.20 1328.16L2577.37 1330.99Z" fill="#f0f0f0" stroke="#f0f0f0" stroke-width="2.6" stroke-linejoin="round"/><path d="M2562.10 1342.30L2563.30 1337.14L2572.49 1327.95L2576.45 1331.91L2567.26 1341.10Z M2573.41 1327.03L2576.24 1324.20L2580.20 1328.16L2577.37 1330.99Z" fill="#3c3c3c"/><path d="M2566.48 1338.20L2573.91 1330.77" stroke="#f0f0f0" stroke-width="0.9"/></svg>
<div class="t" style="left:149.40px;top:16.00px;font-size:29.5px;line-height:37px;color:#f0f0f1;letter-spacing:0.109px;-webkit-text-stroke:0.45px #f0f0f1;">My Site</div>
<div class="t" style="left:279.40px;top:15.50px;font-size:29.5px;line-height:37px;color:#0a4b14;letter-spacing:-1.070px;-webkit-text-stroke:0.4px #0a4b14;">Live</div>
<div class="t" style="left:417.30px;top:16.00px;font-size:29.5px;line-height:37px;color:#a7aaad;">0</div>
<div class="t" style="left:524.00px;top:16.00px;font-size:29.5px;line-height:37px;color:#f0f0f1;letter-spacing:0.145px;-webkit-text-stroke:0.45px #f0f0f1;">New</div>
<div class="t" style="left:689.50px;top:17.00px;font-size:28px;line-height:35px;color:#fff;font-weight:700;">2</div>
<div class="t" style="left:2536.00px;top:16.00px;font-size:29.5px;line-height:37px;color:#f0f0f1;letter-spacing:0.524px;-webkit-text-stroke:0.45px #f0f0f1;">Howdy, diegoportillo</div>
<div class="t" style="left:79.50px;top:116.00px;font-size:31px;line-height:39px;color:#f0f0f1;letter-spacing:0.131px;-webkit-text-stroke:0.45px #f0f0f1;">Site Assist</div>
<div class="t" style="left:78.50px;top:191.00px;font-size:31px;line-height:39px;color:#f0f0f1;letter-spacing:0.473px;-webkit-text-stroke:0.45px #f0f0f1;">Dashboard</div>
<div class="t" style="left:78.50px;top:290.40px;font-size:31px;line-height:39px;color:#f0f0f1;letter-spacing:0.267px;-webkit-text-stroke:0.45px #f0f0f1;">Posts</div>
<div class="t" style="left:78.50px;top:365.50px;font-size:31px;line-height:39px;color:#f0f0f1;letter-spacing:0.202px;-webkit-text-stroke:0.45px #f0f0f1;">Media</div>
<div class="t" style="left:78.50px;top:440.50px;font-size:31px;line-height:39px;color:#f0f0f1;letter-spacing:-0.250px;-webkit-text-stroke:0.45px #f0f0f1;">Pages</div>
<div class="t" style="left:79.50px;top:515.50px;font-size:31px;line-height:39px;color:#f0f0f1;letter-spacing:0.376px;-webkit-text-stroke:0.45px #f0f0f1;">Comments</div>
<div class="t" style="left:80.50px;top:614.00px;font-size:31px;line-height:39px;color:#f0f0f1;letter-spacing:0.318px;-webkit-text-stroke:0.45px #f0f0f1;">WooCommerce</div>
<div class="t" style="left:78.50px;top:689.00px;font-size:31px;line-height:39px;color:#f0f0f1;letter-spacing:0.852px;-webkit-text-stroke:0.45px #f0f0f1;">Products</div>
<div class="t" style="left:78.50px;top:764.50px;font-size:31px;line-height:39px;color:#f0f0f1;letter-spacing:0.166px;-webkit-text-stroke:0.45px #f0f0f1;">Payments</div>
<div class="t" style="left:80.50px;top:839.50px;font-size:31px;line-height:39px;color:#f0f0f1;letter-spacing:0.407px;-webkit-text-stroke:0.45px #f0f0f1;">Analytics</div>
<div class="t" style="left:78.50px;top:914.50px;font-size:31px;line-height:39px;color:#f0f0f1;letter-spacing:0.754px;-webkit-text-stroke:0.45px #f0f0f1;">Marketing</div>
<div class="t" style="left:80.50px;top:1014.00px;font-size:31px;line-height:39px;color:#f0f0f1;letter-spacing:0.351px;-webkit-text-stroke:0.45px #f0f0f1;">Appearance</div>
<div class="t" style="left:78.50px;top:1089.50px;font-size:31px;line-height:39px;color:#f0f0f1;letter-spacing:0.388px;-webkit-text-stroke:0.45px #f0f0f1;">Plugins</div>
<div class="t" style="left:78.50px;top:1164.50px;font-size:31px;line-height:39px;color:#f0f0f1;letter-spacing:0.437px;-webkit-text-stroke:0.45px #f0f0f1;">Users</div>
<div class="t" style="left:80.50px;top:1239.50px;font-size:31px;line-height:39px;color:#f0f0f1;letter-spacing:0.158px;-webkit-text-stroke:0.45px #f0f0f1;">Tools</div>
<div class="t" style="left:79.50px;top:1315.00px;font-size:31px;line-height:39px;color:#f0f0f1;letter-spacing:0.670px;-webkit-text-stroke:0.45px #f0f0f1;">Settings</div>
<div class="t" style="left:80.50px;top:1414.00px;font-size:31px;line-height:39px;color:#f0f0f1;-webkit-text-stroke:0.45px #f0f0f1;">Yoast SEO</div>
<div class="t" style="left:1701.50px;top:83.50px;font-size:31px;line-height:39px;color:#3c3c3c;letter-spacing:0.572px;text-decoration:underline;text-decoration-thickness:2px;text-underline-offset:3px;">Activate full screen</div>
<div class="t" style="left:424.00px;top:279.00px;font-size:30.5px;line-height:38px;color:#3c3c3c;letter-spacing:-0.022px;">Settings</div>
<div class="t" style="left:568.70px;top:279.00px;font-size:30.5px;line-height:38px;color:#3c3c3c;letter-spacing:0.078px;">Help</div>
<div class="t" style="left:666.00px;top:279.00px;font-size:30.5px;line-height:38px;color:#3c3c3c;letter-spacing:-0.549px;">Extensions</div>
<div class="t" style="left:846.00px;top:279.00px;font-size:30.5px;line-height:38px;color:#3c3c3c;letter-spacing:-0.301px;">Global sort</div>
<div class="t" style="left:1025.60px;top:279.00px;font-size:30.5px;line-height:38px;color:#3c3c3c;letter-spacing:-0.190px;">My license</div>
<div class="t" style="left:1203.80px;top:279.00px;font-size:30.5px;line-height:38px;color:#3c3c3c;letter-spacing:-0.631px;">Columns manager</div>
<div class="t" style="left:1479.00px;top:279.00px;font-size:30.5px;line-height:38px;color:#3c3c3c;letter-spacing:-0.335px;">Export</div>
<div class="t" style="left:1601.00px;top:279.00px;font-size:30.5px;line-height:38px;color:#3c3c3c;letter-spacing:0.147px;">Import</div>
<div class="t" style="left:464.00px;top:363.00px;font-size:30.5px;line-height:38px;color:#fff;letter-spacing:-0.419px;-webkit-text-stroke:0.9px #fff;">Save</div>
<div class="t" style="left:610.00px;top:364.00px;font-size:30.8px;line-height:38px;color:#3c3c3c;letter-spacing:0.065px;">Add new</div>
<div class="t" style="left:768.00px;top:362.00px;font-size:30.8px;line-height:38px;color:#2c3338;">1</div>
<div class="t" style="left:949.60px;top:364.00px;font-size:30.8px;line-height:38px;color:#3c3c3c;letter-spacing:0.290px;">Search</div>
<div class="t" style="left:1128.80px;top:364.00px;font-size:30.8px;line-height:38px;color:#3c3c3c;letter-spacing:0.253px;">Bulk Edit</div>
<div class="t" style="left:1336.60px;top:364.00px;font-size:30.8px;line-height:38px;color:#3c3c3c;letter-spacing:0.842px;">Duplicate</div>
<div class="t" style="left:1540.00px;top:364.00px;font-size:30.8px;line-height:38px;color:#3c3c3c;letter-spacing:-0.541px;">AI</div>
<div class="t" style="left:1614.60px;top:362.50px;font-size:30.8px;line-height:38px;color:#646970;letter-spacing:0.801px;">Locate cell</div>
<div class="t" style="left:1947.00px;top:362.50px;font-size:30.8px;line-height:38px;color:#646970;letter-spacing:0.711px;">Locate column</div>
<div class="t" style="left:417.90px;top:455.00px;font-size:30.8px;line-height:38px;color:#3c434a;font-weight:700;letter-spacing:0.331px;">Current spreadsheet:</div>
<div class="t" style="left:743.20px;top:455.00px;font-size:30.8px;line-height:38px;color:#3c434a;letter-spacing:0.616px;">Posts.</div>
<div class="t" style="left:839.00px;top:455.00px;font-size:30.8px;line-height:38px;color:#3c434a;font-weight:700;letter-spacing:-0.684px;">Rows:</div>
<div class="t" style="left:935.00px;top:455.00px;font-size:30.8px;line-height:38px;color:#3c434a;letter-spacing:-0.835px;">11.</div>
<div class="t" style="left:652.00px;top:531.00px;font-size:30.8px;line-height:38px;color:#1d1d1d;letter-spacing:0.044px;">ID</div>
<div class="t" style="left:1009.00px;top:531.00px;font-size:30.8px;line-height:38px;color:#1d1d1d;letter-spacing:0.898px;">Title</div>
<div class="t" style="left:1858.60px;top:530.80px;font-size:30.8px;line-height:38px;color:#1d1d1d;letter-spacing:-0.211px;">URL Slug</div>
<div class="t" style="left:2792.00px;top:531.00px;font-size:30.8px;line-height:38px;color:#1d1d1d;">Content</div>
<div class="t" style="left:442.50px;top:581.00px;font-size:30.8px;line-height:38px;color:#3c3c3c;">1</div>
<div class="t" style="left:631.70px;top:591.50px;font-size:30.8px;line-height:38px;color:#3c3c3c;letter-spacing:2.297px;">36089</div>
<div class="t" style="left:756.00px;top:591.50px;font-size:30.8px;line-height:38px;color:#3c3c3c;letter-spacing:0.307px;">Dance Challenges and Digital Fame: T...</div>
<div class="t" style="left:1373.00px;top:591.50px;font-size:30.8px;line-height:38px;color:#3c434a;letter-spacing:1.063px;">dance-challenges-and-digital-fame-tiktoks-impact-on-pop-music <u>(Enable)</u></div>
<div class="t" style="left:2627.00px;top:591.50px;font-size:30.8px;line-height:38px;color:#3c3c3c;letter-spacing:0.500px;">TikTok has undeniably</div>
<div class="t" style="left:443.00px;top:653.36px;font-size:30.8px;line-height:38px;color:#3c3c3c;">2</div>
<div class="t" style="left:631.70px;top:663.86px;font-size:30.8px;line-height:38px;color:#3c3c3c;letter-spacing:2.297px;">36088</div>
<div class="t" style="left:757.00px;top:663.86px;font-size:30.8px;line-height:38px;color:#3c3c3c;letter-spacing:0.497px;">Cancel Culture vs. Accountability: Wh...</div>
<div class="t" style="left:1373.00px;top:663.86px;font-size:30.8px;line-height:38px;color:#3c434a;letter-spacing:1.067px;">cancel-culture-vs-accountability-where-do-we-draw-the-line <u>(Enable)</u></div>
<div class="t" style="left:2627.00px;top:663.86px;font-size:30.8px;line-height:38px;color:#3c3c3c;letter-spacing:0.500px;">The discourse surrounding</div>
<div class="t" style="left:443.00px;top:725.72px;font-size:30.8px;line-height:38px;color:#3c3c3c;">3</div>
<div class="t" style="left:631.70px;top:736.22px;font-size:30.8px;line-height:38px;color:#3c3c3c;letter-spacing:2.297px;">36087</div>
<div class="t" style="left:756.00px;top:736.22px;font-size:30.8px;line-height:38px;color:#3c3c3c;letter-spacing:0.052px;">Remakes, Reboots, and Revivals: Are ...</div>
<div class="t" style="left:1372.00px;top:736.22px;font-size:30.8px;line-height:38px;color:#3c434a;letter-spacing:0.948px;">remakes-reboots-and-revivals-are-we-out-of-original-ideas <u>(Enable)</u></div>
<div class="t" style="left:2627.00px;top:736.22px;font-size:30.8px;line-height:38px;color:#3c3c3c;letter-spacing:0.500px;">The increasing prevalence</div>
<div class="t" style="left:443.00px;top:798.08px;font-size:30.8px;line-height:38px;color:#3c3c3c;">4</div>
<div class="t" style="left:631.70px;top:808.58px;font-size:30.8px;line-height:38px;color:#3c3c3c;letter-spacing:2.297px;">36086</div>
<div class="t" style="left:757.00px;top:808.58px;font-size:30.8px;line-height:38px;color:#3c3c3c;letter-spacing:0.221px;">Global Pop Culture: How K-Pop and L...</div>
<div class="t" style="left:1373.00px;top:808.58px;font-size:30.8px;line-height:38px;color:#3c434a;letter-spacing:1.178px;">global-pop-culture-how-k-pop-and-latin-music-conquered-the-world <u>(Enable)</u></div>
<div class="t" style="left:2627.00px;top:808.58px;font-size:30.8px;line-height:38px;color:#3c3c3c;letter-spacing:0.500px;">The global music landscape</div>
<div class="t" style="left:443.00px;top:870.44px;font-size:30.8px;line-height:38px;color:#3c3c3c;">5</div>
<div class="t" style="left:631.70px;top:880.94px;font-size:30.8px;line-height:38px;color:#3c3c3c;letter-spacing:2.297px;">36085</div>
<div class="t" style="left:757.00px;top:880.94px;font-size:30.8px;line-height:38px;color:#3c3c3c;letter-spacing:0.285px;">Gaming Is the New Hollywood: The Ri...</div>
<div class="t" style="left:1373.00px;top:880.94px;font-size:30.8px;line-height:38px;color:#3c434a;letter-spacing:1.106px;">gaming-is-the-new-hollywood-the-rise-of-digital-storytelling <u>(Enable)</u></div>
<div class="t" style="left:2627.00px;top:880.94px;font-size:30.8px;line-height:38px;color:#3c3c3c;letter-spacing:0.500px;">The lines between gaming</div>
<div class="t" style="left:443.00px;top:942.80px;font-size:30.8px;line-height:38px;color:#3c3c3c;">6</div>
<div class="t" style="left:631.70px;top:953.30px;font-size:30.8px;line-height:38px;color:#3c3c3c;letter-spacing:2.297px;">36084</div>
<div class="t" style="left:758.00px;top:953.30px;font-size:30.8px;line-height:38px;color:#3c3c3c;letter-spacing:0.198px;">The Fashion Collabs That Defined Po...</div>
<div class="t" style="left:1374.00px;top:953.30px;font-size:30.8px;line-height:38px;color:#3c434a;letter-spacing:1.060px;">the-fashion-collabs-that-defined-pop-culture-history <u>(Enable)</u></div>
<div class="t" style="left:2625.00px;top:953.30px;font-size:30.8px;line-height:38px;color:#3c3c3c;letter-spacing:0.500px;">Fashion collaborations</div>
<div class="t" style="left:443.00px;top:1015.16px;font-size:30.8px;line-height:38px;color:#3c3c3c;">7</div>
<div class="t" style="left:631.70px;top:1025.66px;font-size:30.8px;line-height:38px;color:#3c3c3c;letter-spacing:2.297px;">36083</div>
<div class="t" style="left:756.00px;top:1025.66px;font-size:30.8px;line-height:38px;color:#3c3c3c;letter-spacing:0.332px;">How Nostalgia Became a Marketing S...</div>
<div class="t" style="left:1372.00px;top:1025.66px;font-size:30.8px;line-height:38px;color:#3c434a;letter-spacing:0.851px;">how-nostalgia-became-a-marketing-superpower <u>(Enable)</u></div>
<div class="t" style="left:2625.00px;top:1025.66px;font-size:30.8px;line-height:38px;color:#3c3c3c;letter-spacing:0.500px;">Nostalgia has transformed</div>
<div class="t" style="left:443.00px;top:1087.52px;font-size:30.8px;line-height:38px;color:#3c3c3c;">8</div>
<div class="t" style="left:631.70px;top:1098.02px;font-size:30.8px;line-height:38px;color:#3c3c3c;letter-spacing:2.297px;">36082</div>
<div class="t" style="left:757.00px;top:1098.02px;font-size:30.8px;line-height:38px;color:#3c3c3c;letter-spacing:0.274px;">Celebrity Brands: When Fame Becom...</div>
<div class="t" style="left:1373.00px;top:1098.02px;font-size:30.8px;line-height:38px;color:#3c434a;letter-spacing:0.933px;">celebrity-brands-when-fame-becomes-a-business-empire <u>(Enable)</u></div>
<div class="t" style="left:2626.00px;top:1098.02px;font-size:30.8px;line-height:38px;color:#3c3c3c;letter-spacing:0.500px;">Celebrity brands have</div>
<div class="t" style="left:443.00px;top:1159.88px;font-size:30.8px;line-height:38px;color:#3c3c3c;">9</div>
<div class="t" style="left:631.70px;top:1170.38px;font-size:30.8px;line-height:38px;color:#3c3c3c;letter-spacing:2.297px;">36081</div>
<div class="t" style="left:756.00px;top:1170.38px;font-size:30.8px;line-height:38px;color:#3c3c3c;letter-spacing:0.428px;">Pop Culture Moments That Broke the ...</div>
<div class="t" style="left:1373.00px;top:1170.38px;font-size:30.8px;line-height:38px;color:#3c434a;letter-spacing:1.083px;">pop-culture-moments-that-broke-the-internet <u>(Enable)</u></div>
<div class="t" style="left:2627.00px;top:1170.38px;font-size:30.8px;line-height:38px;color:#3c3c3c;letter-spacing:0.500px;">The &quot;distracted boyfriend&quot;</div>
<div class="t" style="left:433.94px;top:1232.24px;font-size:30.8px;line-height:38px;color:#3c3c3c;">10</div>
<div class="t" style="left:631.70px;top:1242.74px;font-size:30.8px;line-height:38px;color:#3c3c3c;letter-spacing:2.297px;">36080</div>
<div class="t" style="left:758.00px;top:1242.74px;font-size:30.8px;line-height:38px;color:#3c3c3c;letter-spacing:0.395px;">The Downfall of the Influencer? Why ...</div>
<div class="t" style="left:1374.00px;top:1242.74px;font-size:30.8px;line-height:38px;color:#3c434a;letter-spacing:0.976px;">the-downfall-of-the-influencer-why-audiences-are-craving-authenticity <u>(Ena</u>...</div>
<div class="t" style="left:2627.00px;top:1242.74px;font-size:30.8px;line-height:38px;color:#3c3c3c;letter-spacing:0.500px;">The carefully curated</div>
<div class="t" style="left:435.08px;top:1304.60px;font-size:30.8px;line-height:38px;color:#3c3c3c;">11</div>
<div class="t" style="left:631.70px;top:1315.10px;font-size:30.8px;line-height:38px;color:#3c3c3c;letter-spacing:2.297px;">36079</div>
<div class="t" style="left:756.00px;top:1315.10px;font-size:30.8px;line-height:38px;color:#3c3c3c;letter-spacing:0.441px;">Pop Culture and Identity: How Media ...</div>
<div class="t" style="left:1373.00px;top:1315.10px;font-size:30.8px;line-height:38px;color:#3c434a;letter-spacing:1.076px;">pop-culture-and-identity-how-media-shapes-who-we-are <u>(Enable)</u></div>
<div class="t" style="left:2625.00px;top:1315.10px;font-size:30.8px;line-height:38px;color:#3c3c3c;letter-spacing:0.500px;">Pop culture acts as a</div>
<svg style="left:0;top:0" width="2880" height="700" viewBox="0 0 2880 700"><path d="M2324 295.2L2366.7 549.5L2351.4 533L2341.6 542L2380.4 586.3L2402 531.4L2389.5 526.7L2380.4 547.1L2337.8 292.6Z" fill="#fff" stroke="#fff" stroke-width="9" stroke-linejoin="round"/><path d="M2324 295.2L2366.7 549.5L2351.4 533L2341.6 542L2380.4 586.3L2402 531.4L2389.5 526.7L2380.4 547.1L2337.8 292.6Z" fill="#ff0000"/></svg>
</body></html>
